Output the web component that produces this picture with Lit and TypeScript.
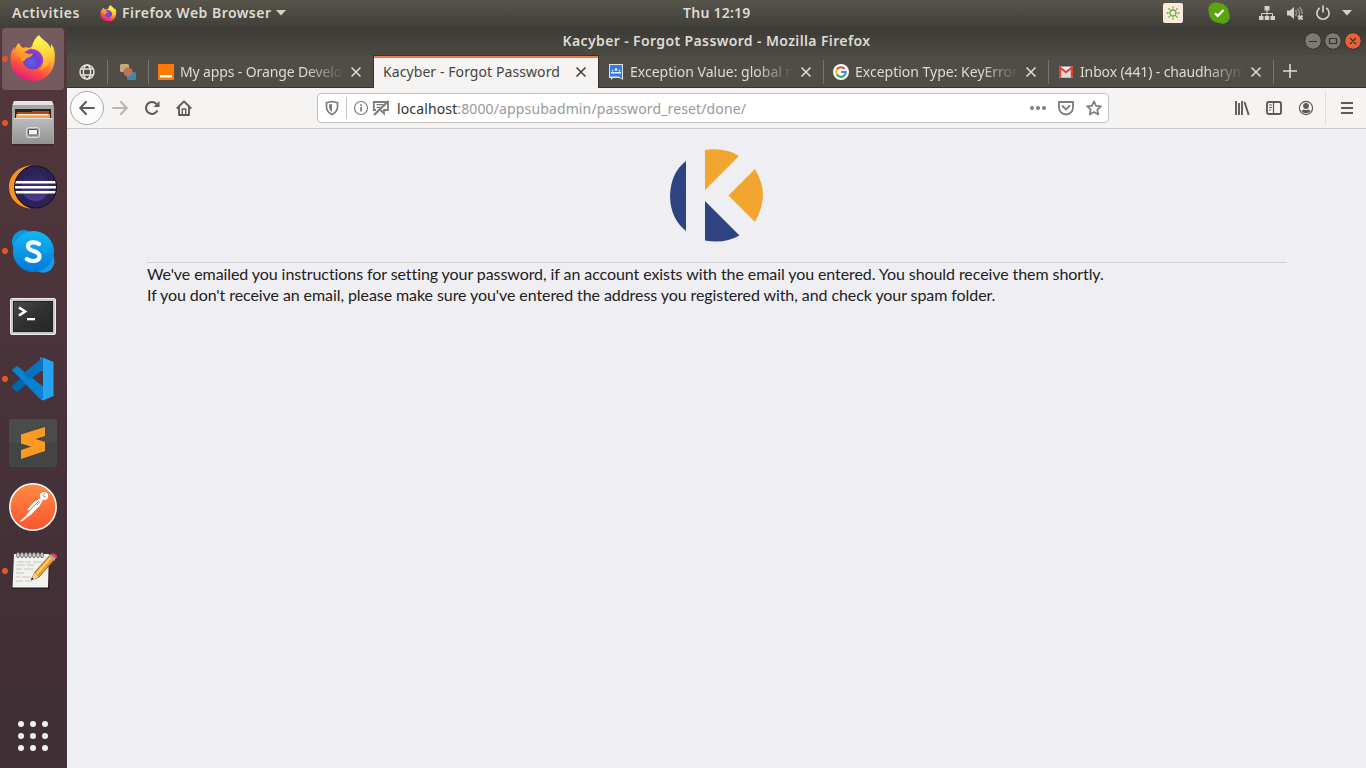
import { LitElement, html, css, svg } from "lit";
import { customElement } from "lit/decorators.js";

const firefox = (size: number) => html`<svg width=${size} height=${size} viewBox="0 0 48 48">
  <defs>
    <linearGradient id="fb" x1=".8" y1="0" x2=".3" y2="1"><stop offset="0" stop-color="#fff44f"/><stop offset=".35" stop-color="#ffb02e"/><stop offset=".65" stop-color="#ff5a36"/><stop offset="1" stop-color="#e3128a"/></linearGradient>
    <radialGradient id="fg" cx=".4" cy=".65" r=".6"><stop offset="0" stop-color="#5b62f0"/><stop offset=".6" stop-color="#6a40c8"/><stop offset="1" stop-color="#a03bd8"/></radialGradient>
    <linearGradient id="fy" x1=".4" y1="0" x2=".6" y2="1"><stop offset="0" stop-color="#fff84f"/><stop offset=".5" stop-color="#ffdb3a"/><stop offset="1" stop-color="#ff9a2c"/></linearGradient>
  </defs>
  <path fill="url(#fb)" d="M10 8c1 2 2 4 4 5 2-1 4-1 6 0L31 7l14 11c3 12-4 28-20 28C10 46 1 36 1.500 24c0-6 2-10 4-12v4c1-4 2-6 4.500-8z"/>
  <circle cx="24" cy="24" r="10.500" fill="url(#fg)"/>
  <path fill="url(#fy)" d="M30 0c-5 4-7 9-7 14 5 0 10 4 11 9 1 6-1 10-4 12 8-1 11-7 10-12 2 2 2 5 2 7 6-8 4-17 0-21 0 2 0 3-.5 4C40 7 33 5 30 0z"/>
  <path fill="#ff9a26" d="M7 19c4-2 10-1 13 0l4-.5c-1 3-4 4-7 5-1 2-2 3-3 3-2-3-4-5-7-7.500z"/>
</svg>`;

const files = html`<svg width="48" height="48" viewBox="0 0 48 48">
  <defs><linearGradient id="fc" x1="0" y1="0" x2="0" y2="1"><stop offset="0" stop-color="#bcbcbc"/><stop offset="1" stop-color="#929292"/></linearGradient></defs>
  <path d="M3 45h42v2H3z" fill="#2b2024" opacity=".5"/>
  <path d="M5 2h38l2 6v37H3V8z" fill="#a5a5a5"/><path d="M5 2h38l1.500 4h-41z" fill="#e3e3e3"/>
  <path d="M6 10h36v10H6z" fill="#242424"/><path d="M8 13h14l2-1h16v8H8z" fill="#b5470e"/><path d="M7 15h34v4H7z" fill="#f0a052"/><path d="M9 15h30v1.300H9z" fill="#fff3df"/>
  <path d="M5 19h38l1 1v25H4V20z" fill="url(#fc)"/><path d="M5 19h38v1H5z" fill="#dedede"/>
  <rect x="17.500" y="28.500" width="13" height="10" rx="2" fill="#aaa" stroke="#ddd"/><rect x="19.500" y="30.500" width="9" height="5.500" rx=".6" fill="#f4f4f4" stroke="#555"/>
</svg>`;

const eclipse = html`<svg width="48" height="48" viewBox="0 0 48 48">
  <defs><linearGradient id="eg" x1="0" y1="0" x2="0" y2="1"><stop offset="0" stop-color="#2c2255"/><stop offset="1" stop-color="#4b3c91"/></linearGradient><clipPath id="ec"><circle cx="26.500" cy="24" r="20.500"/></clipPath></defs>
  <path d="M22 2.500C10 3 0 12 0 24s10 21 22 21.500C11 42 6 33 6 24S11 6 22 2.500z" fill="#f7941e"/>
  <circle cx="26.500" cy="24" r="21" fill="#2c2255" stroke="#150f22" stroke-width="1"/>
  <circle cx="26.500" cy="24" r="14" fill="url(#eg)"/>
  <g clip-path="url(#ec)" fill="#fff"><path d="M5 18h43v2.500H5zM5 23h43v2.500H5zM5 28h43v2.500H5z"/></g>
</svg>`;

const skype = html`<svg width="48" height="48" viewBox="0 0 48 48">
  <defs><linearGradient id="sk" x1="0" y1="0" x2="0" y2="1"><stop offset="0" stop-color="#13b8f3"/><stop offset="1" stop-color="#0279d8"/></linearGradient></defs>
  <circle cx="15" cy="15" r="12" fill="#0a98e0"/><circle cx="34" cy="34" r="11.500" fill="#149fe5"/><circle cx="24.500" cy="24.500" r="20.500" fill="url(#sk)"/>
  <path d="M30 17c-2.500-2-11-3-11 2.200 0 5.800 11.500 4 11.500 10 0 5.800-9 5.800-12.700 2.800" fill="none" stroke="#fff" stroke-width="4.200" stroke-linecap="round"/>
</svg>`;

const terminal = html`<svg width="48" height="50" viewBox="0 0 48 50">
  <defs><linearGradient id="tg" x1="0" y1="0" x2="1" y2="1"><stop offset="0" stop-color="#4b4b4b"/><stop offset=".5" stop-color="#303030"/><stop offset="1" stop-color="#272727"/></linearGradient></defs>
  <rect x="1.500" y="8.500" width="45" height="36" rx="1.500" fill="#c8c8c8" stroke="#ededed"/><rect x="4.500" y="11.500" width="39" height="30" fill="url(#tg)" stroke="#222"/>
  <path d="M10 17.500l6 4-6 4" fill="none" stroke="#fff" stroke-width="2.700"/><path d="M18 28h8v2.300h-8z" fill="#fff"/>
</svg>`;

const code = html`<svg width="48" height="48" viewBox="0 0 48 48">
  <path d="M34 3v13L8 37l-5-4v-2z" fill="#0066ad"/><path d="M31 2.500L35 3l9.500 4v34L34 45.500l-2-1V14z" fill="#27a3f0"/><path d="M34 15v19L21 24z" fill="#4b343b"/><path d="M3 15l5-4 26 20.500V44l-3 0z" fill="#0a82d2"/><path d="M34 2.500v12L21.500 24.300 14 18.500z" fill="#0872bd"/>
</svg>`;

const sublime = html`<svg width="48" height="48" viewBox="0 0 48 48">
  <rect width="48" height="48" rx="3" fill="#4b4b4a"/><path d="M0 24h48v21q0 3-3 3H3q-3 0-3-3z" fill="#434443"/>
  <path d="M12 24.500L36 17v-9l-24 7.500z" fill="#f99a22"/><path d="M12 40l24-8v-9l-24 8z" fill="#f99a22"/><path d="M12 15.500v9L36 32v-9z" fill="#ff9b20"/>
</svg>`;

const postman = html`<svg width="48" height="48" viewBox="0 0 48 48">
  <defs><linearGradient id="pg" x1="0" y1="0" x2="0" y2="1"><stop offset="0" stop-color="#ff8a42"/><stop offset="1" stop-color="#fb5530"/></linearGradient></defs>
  <circle cx="24" cy="24" r="23.200" fill="url(#pg)" stroke="#fff" stroke-width="1.500"/>
  <circle cx="35" cy="13" r="4.100" fill="#fff"/><path d="M36 10l-2 3 3 1" fill="none" stroke="#fb8a55"/>
  <path d="M32 15l-7 4-7 7.500 2 1 3-2-7 8-5.500 5 3-.5 8-6 9-9 3.500-6z" fill="#fff"/><path d="M30 18L18 30M28 22l3-3" stroke="#ff7043" fill="none"/>
</svg>`;

const notes = html`<svg width="48" height="48" viewBox="0 0 48 48">
  <path d="M5 8h36l-1 34H3z" fill="#241b1e"/><path d="M5 7h35l-1 33.500H3.500z" fill="#f1f1ee"/>
  ${[9, 13, 17, 21, 25, 29, 33].map((x) => svg`<ellipse cx=${x} cy="8" rx="1.400" ry="2.800" fill="#ddd" stroke="#555" stroke-width=".8"/>`)}
  <path d="M8 15h7m1 0h6m2 0h9M7 18h9m2 0h7M7 22h6m2 0h9M7 26h8M7 30h4m2 0h8M7 34h7m2 0h7" stroke="#bbb" stroke-width=".8"/>
  <path d="M22 33l4-8L41 8l5 4-16 18z" fill="#f19a2b" stroke="#93520f" stroke-width=".8"/><path d="M27 26L42 9l1.500 1.300-15 17.500z" fill="#ffcf72"/><path d="M22 33l3.500-7 4 4z" fill="#eed2a2"/><path d="M22 33l1-2.500 1.500 1.500z" fill="#111"/>
  <path d="M39 9l3-2 5 4-2 3z" fill="#aaa"/><path d="M41.500 7.500q3-2 5.500 0 2 2 0 4z" fill="#e8404c"/>
</svg>`;

const cross = html`<svg width="12" height="12" viewBox="0 0 12 12"><path d="M1.500 1.500l9 9m0-9l-9 9" fill="none" stroke="currentColor" stroke-width="1.600"/></svg>`;

const orangeIcon = html`<svg width="16" height="16"><path fill="#ff7900" d="M0 0h16v16H0z"/><path fill="#fff" d="M2 11h12v2.500H2z"/></svg>`;
const groupsIcon = html`<svg width="16" height="16" viewBox="0 0 16 16"><path d="M1 0h14v16l-3.500-2H5l-2 2v-2H1z" fill="#e8e4d5"/><path d="M2 1h12v14l-3-2.500H2z" fill="#2f7df2"/><circle cx="8" cy="5.500" r="1.300" fill="#fff"/><circle cx="4.500" cy="6.800" r=".8" fill="#fff"/><circle cx="11.500" cy="6.800" r=".8" fill="#fff"/><path d="M3 8h10v1.500H3z" fill="#dce9ff"/></svg>`;
const googleIcon = html`<svg width="16" height="16" viewBox="0 0 16 16"><circle cx="8" cy="8" r="8" fill="#fff"/><g fill="none" stroke-width="2.200"><path d="M11.500 4.800A4.700 4.700 0 0 0 4 5.500" stroke="#ea4335"/><path d="M4 5.500a5 5 0 0 0 0 5" stroke="#fbbc05"/><path d="M4 10.500a4.700 4.700 0 0 0 7.300 1" stroke="#34a853"/><path d="M8 8h4.700q0 2.200-1.400 3.500" stroke="#4285f4"/></g></svg>`;
const gmailIcon = html`<svg width="16" height="16" viewBox="0 0 16 16"><path d="M1 2.500h14v11H1z" fill="#efefef"/><path d="M3 13.500V5l5 4 5-4v8.500z" fill="#dcdcdc"/><path d="M1 13.500v-11h1.500L8 7l5.500-4.500H15v11h-2.200V5.700L8 9.500 3.200 5.700v7.800z" fill="#db4437"/></svg>`;

interface Tab { title: string; icon?: unknown; kind: string }
const tabs: Tab[] = [
  { title: "My apps - Orange Develo", icon: orangeIcon, kind: "t1" },
  { title: "Kacyber - Forgot Password", kind: "active" },
  { title: "Exception Value: global n", icon: groupsIcon, kind: "t3" },
  { title: "Exception Type: KeyError", icon: googleIcon, kind: "t4" },
  { title: "Inbox (441) - chaudharym", icon: gmailIcon, kind: "t5" },
];

const dock = [
  { icon: firefox(48), running: true, current: true },
  { icon: files, running: true },
  { icon: eclipse },
  { icon: skype, running: true },
  { icon: terminal },
  { icon: code, running: true },
  { icon: sublime },
  { icon: postman },
  { icon: notes, running: true },
];

@customElement("app-root")
export class AppRoot extends LitElement {
  static styles = css`
    :host { display: grid; grid-template: 27px 741px / 67px 1299px; width: 1366px; height: 768px; overflow: hidden; font: 14px/20px "Noto Sans", sans-serif; }
    * { box-sizing: border-box; }
    svg { display: block; flex: none; }
    .top { grid-column: 1 / 3; display: grid; grid-template-columns: 683px 67px 1fr; align-items: center; background: linear-gradient(#57554b, #403f3a); color: #dfdbd2; font-weight: 600; font-size: 14px; padding-bottom: 1px; }
    .left, .right { display: flex; align-items: center; }
    .left { padding-left: 12px; }
    .act { width: 88px; letter-spacing: .55px; }
    .app { width: 149px; margin: 0 5px; letter-spacing: .48px; white-space: nowrap; }
    .clock { letter-spacing: .25px; white-space: nowrap; }
    .right { justify-content: flex-end; padding-right: 14px; }
    .tray { margin-right: 25px; }
    .check { margin-right: 29px; }
    .net { margin-right: 11px; }
    .vol { margin-right: 11px; }
    .pow { margin-right: 11px; }
    .dock { display: flex; flex-direction: column; background: linear-gradient(#54373c, #47323a 55%, #412f35 88%, #3f3135); }
    .slot { display: flex; align-items: center; height: 62px; width: 62px; margin: 1px 0 1px 2px; border-radius: 4px; }
    .slot.current { background: #735b60; }
    .dot { width: 6px; height: 6px; border-radius: 50%; margin-right: 1px; flex: none; }
    .dot.on { background: #e95420; }
    .grid { margin: auto 0 17px 18px; }
    .win { display: flex; flex-direction: column; background: #efeef3; }
    .title { height: 28px; display: grid; grid-template-columns: 1fr auto 1fr; align-items: center; background: linear-gradient(#3b3a36, #4b4943); color: #dfdbd2; font-size: 14px; font-weight: 600; letter-spacing: .38px; }
    .btns { justify-self: end; margin-right: 4px; }
    .tabs { height: 33px; display: flex; background: #504d46; border-bottom: 1px solid #34332f; color: #dfdbd2; }
    .pin { display: grid; place-items: center; position: relative; width: 41px; padding: 1px 1px 0 0; }
    .pin::after, .tab::after { content: ""; position: absolute; right: 0; top: 5px; height: 24px; width: 1px; background: #77746b; }
    .tab { position: relative; width: 225px; display: flex; align-items: center; padding: 1px 12px 0 9px; gap: 6px; }
    .label { flex: 1; min-width: 0; white-space: nowrap; }
    .tab:not(.active) .label { -webkit-mask-image: linear-gradient(90deg, #000 calc(100% - 38px), transparent); mask-image: linear-gradient(90deg, #000 calc(100% - 38px), transparent); }
    .t1 .label { letter-spacing: -.13px; }
    .t5 .label { letter-spacing: -.13px; }
    .t1::after { display: none; }
    .active { height: 33px; background: #f5f4f2; color: #44433f; border: solid #34332f; border-width: 1px 1px 0; width: 226px; margin-left: -1px; z-index: 1; padding: 0 11px 0 9px; box-shadow: inset 0 2px #f0784f; letter-spacing: .08px; }
    .active::after { display: none; }
    .plus { align-self: center; margin-left: 9px; }
    .bar { height: 41px; display: flex; align-items: center; background: #f5f4f2; border-bottom: 1px solid #cac8c6; color: #5c5b59; padding: 0 11px 0 3px; }
    .back { width: 34px; height: 34px; border: 1px solid #a9a8a6; border-radius: 50%; background: #fcfcfc; display: grid; place-items: center; margin-right: 8px; }
    .fwd, .reload { margin-right: 16px; }
    .fwd { color: #b7b6b4; }
    .url { margin-left: 125px; width: 792px; height: 30px; border: 1px solid #c3c1bf; border-radius: 4px; background: #fff; display: flex; align-items: center; color: #7d7d7d; padding: 0 6px; }
    .split { width: 1px; height: 22px; background: #c4c4c4; margin: 0 6px; }
    .addr { flex: 1; color: #999; margin-left: 7px; padding-top: 1px; letter-spacing: .13px; }
    .host { color: #33322e; }
    .info { margin-right: 3px; }
    .dots, .pocket { margin-right: 12px; }
    .tools { display: flex; align-items: center; margin-left: auto; gap: 16px; }
    .vline { width: 1px; height: 34px; background: #dedddb; margin: 0 -3px 0 -5px; }
    .page { padding: 20px 79px 0 80px; color: #212121; font: 16px/21px Lato, sans-serif; }
    .logo { display: flex; justify-content: center; height: 114px; border-bottom: 1px solid #d2d2d5; padding-right: 2px; }
    .msg { margin: 0; white-space: nowrap; letter-spacing: -.08px; font-variant-ligatures: none; }
  `;

  render() {
    return html`
      <div class="top">
        <div class="left">
          <span class="act">Activities</span>${firefox(17)}<span class="app">Firefox Web Browser</span>
          <svg width="10" height="6"><path d="M0 0h10L5 5.500z" fill="#d5d1c8"/></svg>
        </div>
        <span class="clock">Thu 12:19</span>
        <div class="right">
          <svg class="tray" width="20" height="20" viewBox="0 0 20 20"><rect width="20" height="20" rx="2" fill="#fde8dc"/><g fill="none" stroke="#5fb236" stroke-width="1.300"><circle cx="10" cy="10" r="3"/><path d="M10 3.500v2m0 9v2M3.500 10h2m9 0h2M5.400 5.400l1.400 1.400m6.400 6.400l1.400 1.400m0-9.200l-1.400 1.400M6.800 13.200l-1.400 1.400"/></g></svg>
          <svg class="check" width="22" height="22" viewBox="0 0 22 22"><circle cx="7.500" cy="7.500" r="7.200" fill="#5aa413"/><circle cx="14.500" cy="14.500" r="7.300" fill="#5aa413"/><circle cx="11" cy="11" r="10" fill="#5aa413"/><path d="M7 11.200l2.700 2.700L15.500 8" fill="none" stroke="#fff" stroke-width="2.200"/></svg>
          <svg class="net" width="16" height="16" viewBox="0 0 16 16" fill="#d5d1c8"><path d="M5.500 1h5v4.500h-5zM0 11h4.500v4H0zM5.700 11h4.600v4H5.700zM11.500 11H16v4h-4.500z"/><path d="M8 5v6M2.500 11V8.500h11V11" fill="none" stroke="#d5d1c8"/></svg>
          <svg class="vol" width="18" height="16" viewBox="0 0 18 16"><path d="M1 5.500h3L8 2v12l-4-3.500H1z" fill="#d5d1c8"/><path d="M9.500 5q2 3 0 6M11.500 3.500q4 5 0 9M13.500 2q3 3 2.500 7" fill="none" stroke="#8f8c84" stroke-width="1.500"/><path d="M12.500 10.500l4 4m0-4l-4 4" stroke="#d5d1c8" stroke-width="2"/></svg>
          <svg class="pow" width="16" height="16" viewBox="0 0 16 16" fill="none" stroke="#d5d1c8" stroke-width="1.700"><path d="M4.700 3A6.100 6.100 0 1 0 11.300 3M8 .5v7"/></svg>
          <svg width="10" height="6"><path d="M0 0h10L5 5.500z" fill="#d5d1c8"/></svg>
        </div>
      </div>
      <div class="dock">
        ${dock.map((d) => html`<div class="slot ${d.current ? "current" : ""}"><span class="dot ${d.running ? "on" : ""}"></span>${d.icon}</div>`)}
        <svg class="grid" width="30" height="30">${[3, 15, 27].map((y) => [3, 15, 27].map((x) => svg`<circle cx=${x} cy=${y} r="3" fill="#f1f0ee"/>`))}</svg>
      </div>
      <div class="win">
        <div class="title">
          <span></span><span>Kacyber - Forgot Password - Mozilla Firefox</span>
          <svg class="btns" width="58" height="18" viewBox="0 0 58 18"><g stroke="#33322f"><circle cx="9" cy="9" r="8.300" fill="#7c7a73"/><circle cx="29" cy="9" r="8.300" fill="#7c7a73"/><circle cx="49" cy="9" r="8.300" fill="#ec6037"/></g><path d="M5 9.500h8M25.500 6.500h7v5h-7zM46 6l6 6m0-6l-6 6" fill="none" stroke="#33322f" stroke-width="1.200"/></svg>
        </div>
        <div class="tabs">
          <div class="pin"><svg width="16" height="16" viewBox="0 0 16 16" fill="none" stroke="#e4e1da" stroke-width="1.500"><circle cx="8" cy="8" r="7"/><ellipse cx="8" cy="8" rx="3.600" ry="7"/><path d="M2 5h12M2 11h12"/></svg></div>
          <div class="pin"><svg width="16" height="16" viewBox="0 0 16 16"><rect width="9" height="8" rx="1.500" fill="#c9aa74"/><rect x="7" y="8" width="9" height="8" rx="1.500" fill="#3d87b5"/><circle cx="8" cy="8" r="4.500" fill="#bc7255"/></svg></div>
          ${tabs.map((t) => html`<div class="tab ${t.kind}">${t.icon ?? ""}<span class="label">${t.title}</span>${cross}</div>`)}
          <svg class="plus" width="14" height="14"><path d="M7 0v14M0 7h14" stroke="#dfdbd2" stroke-width="1.600"/></svg>
        </div>
        <div class="bar">
          <div class="back"><svg width="16" height="14" viewBox="0 0 16 14" fill="none" stroke="currentColor" stroke-width="2" stroke-linecap="round" stroke-linejoin="round"><path d="M15 7H1.500M7 1L1.200 7 7 13"/></svg></div>
          <svg class="fwd" width="16" height="14" viewBox="0 0 16 14" fill="none" stroke="currentColor" stroke-width="2" stroke-linecap="round" stroke-linejoin="round"><path d="M1 7h13.500M9 1l5.800 6L9 13"/></svg>
          <svg class="reload" width="16" height="16" viewBox="0 0 16 16"><path d="M13.400 10.500A6 6 0 1 1 12.500 4" fill="none" stroke="currentColor" stroke-width="2"/><path d="M15.500 1v6h-6z" fill="currentColor"/></svg>
          <svg width="16" height="16" viewBox="0 0 16 16" fill="none" stroke="currentColor" stroke-width="1.900" stroke-linejoin="round"><path d="M.8 8.500L8 1.300l7.200 7.200M3 7v8h10V7"/><path d="M6.300 15V9h3.400v6" stroke-width="1.400"/></svg>
          <div class="url">
            <svg width="16" height="16" viewBox="0 0 16 16"><path d="M8 1.500l5.500 1.200v4.500Q13.200 12 8 14.500 2.800 12 2.500 7.200V2.700z" fill="none" stroke="currentColor" stroke-width="1.700"/><path d="M8 4v8Q5 10 5 7V4.600z" fill="currentColor"/></svg>
            <span class="split"></span>
            <svg class="info" width="16" height="16" viewBox="0 0 16 16"><circle cx="8" cy="8" r="6.500" fill="none" stroke="currentColor" stroke-width="1.200"/><path d="M7.200 7h1.700v4.500H7.200zM7.200 4.300h1.700v1.600H7.200z" fill="currentColor"/></svg>
            <svg width="18" height="16" viewBox="0 0 18 16" fill="none" stroke="currentColor" stroke-width="1.800"><path d="M4 10H1.800V2H16v8h-4v3.500L8.500 10"/><path d="M4.500 4.700h7M4.500 7.300h4" stroke-width="1.300"/><path d="M2 15L16.500 1" stroke-width="2.200"/></svg>
            <span class="addr"><span class="host">localhost</span>:8000/appsubadmin/password_reset/done/</span>
            <svg class="dots" width="16" height="16" fill="currentColor"><circle cx="2" cy="8" r="2"/><circle cx="8" cy="8" r="2"/><circle cx="14" cy="8" r="2"/></svg>
            <svg class="pocket" width="16" height="16" viewBox="0 0 16 16" fill="none" stroke="currentColor" stroke-width="1.800"><path d="M1 2h14v5.500a7 7 0 0 1-14 0z" stroke-linejoin="round"/><path d="M4.500 6L8 9.500 11.500 6" stroke-linecap="round"/></svg>
            <svg width="16" height="16" viewBox="0 0 16 16"><path d="M8 1.300l2 4.500 4.900.5-3.600 3.300 1 4.900L8 12l-4.300 2.500 1-4.900L1.100 6.300 6 5.800z" fill="none" stroke="currentColor" stroke-width="1.700" stroke-linejoin="round"/></svg>
          </div>
          <div class="tools">
            <svg width="16" height="16" viewBox="0 0 16 16" fill="none" stroke="currentColor" stroke-width="1.900"><path d="M2 1v14M5 3v12M8 1v14M10.500 2l4.200 13"/></svg>
            <svg width="16" height="16" viewBox="0 0 16 16" fill="none" stroke="currentColor"><rect x="1" y="2" width="14" height="12" rx="1.800" stroke-width="1.900"/><path d="M7.500 2v12M3 5h3M3 7.500h3M3 10h2" stroke-width="1.200"/></svg>
            <svg width="16" height="16" viewBox="0 0 16 16"><circle cx="8" cy="8" r="6.600" fill="none" stroke="currentColor" stroke-width="1.200"/><circle cx="8" cy="6" r="2.900" fill="currentColor"/><path d="M3.500 11q1-1.500 2.500-1.500 2 1 4 0 1.500 0 2.500 1.500Q11 13.300 8 13.300T3.500 11z" fill="currentColor"/></svg>
            <span class="vline"></span>
            <svg width="16" height="16"><path d="M2 3h12M2 8h12M2 13h12" stroke="currentColor" stroke-width="2"/></svg>
          </div>
        </div>
        <div class="page">
          <div class="logo"><svg width="94" height="94" viewBox="-.5 0 94 94"><path fill="#2e4482" d="M16.500 12v70Q1 70 .5 47 1 24 16.500 12zM35.500 52L70 86.500Q55 95 35.500 91.500z"/><path fill="#f2a630" d="M35.500 1Q56-2 69.500 7L35.500 41zM85.500 20Q93.500 34 93.500 46T85.500 73L59 46.500z"/></svg></div>
          <p class="msg">We've emailed you instructions for setting your password, if an account exists with the email you entered. You should receive them shortly.<br>If you don't receive an email, please make sure you've entered the address you registered with, and check your spam folder.</p>
        </div>
      </div>`;
  }
}
